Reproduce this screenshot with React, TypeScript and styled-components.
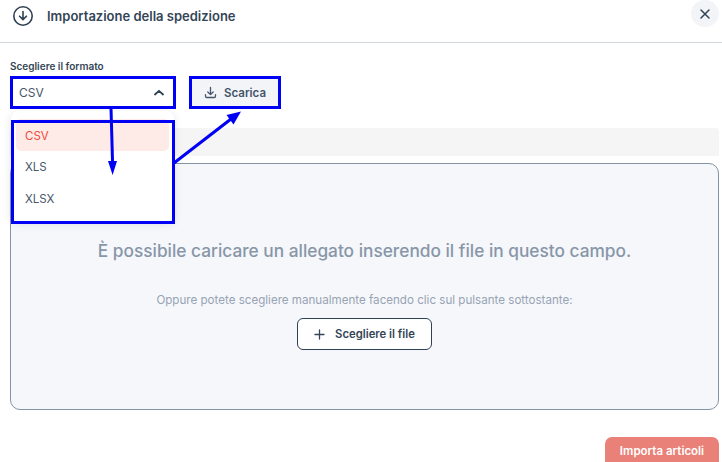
import React from "react";
import styled, { createGlobalStyle } from "styled-components";

const Global = createGlobalStyle`
  html, body { margin: 0; padding: 0; background: #fff; }
  body { font-family: Inter, "Liberation Sans", sans-serif; width: 722px; height: 462px; overflow: hidden; position: relative; }
`;

const Modal = styled.div`
  width: 722px;
  height: 462px;
  overflow: hidden;
  position: relative;
  display: flex;
  flex-direction: column;
`;

const Header = styled.header`
  border-bottom: 1px solid #d0d5dd;
  display: flex;
  align-items: center;
  padding: 0 0 10px 12px;
  height: 32px;
  flex: none;
`;

const HeaderIcon = styled.span`
  display: flex;
  width: 22px;
  height: 22px;
  color: #2f4154;
  margin-right: 13px;
`;

const Title = styled.h1`
  margin: 0;
  font-size: 13px;
  line-height: 16px;
  font-weight: 600;
  color: #344556;
`;

const CloseButton = styled.button`
  position: absolute;
  top: 0;
  left: 691px;
  width: 28px;
  height: 27px;
  border: 0;
  padding: 0;
  border-radius: 50%;
  background: #f2f4f8;
  color: #2f4154;
  display: flex;
  align-items: center;
  justify-content: center;
`;

const Body = styled.main`
  flex: 1;
  display: flex;
  flex-direction: column;
  padding: 17px 3px 0 10px;
  min-height: 0;
`;

const Label = styled.label`
  font-size: 10px;
  line-height: 12px;
  font-weight: 600;
  color: #344556;
  margin-bottom: 4px;
  flex: none;
`;

const Controls = styled.div`
  display: flex;
  gap: 13px;
  height: 33px;
  flex: none;
`;

const Select = styled.div`
  width: 166px;
  box-sizing: border-box;
  display: flex;
  align-items: center;
  justify-content: space-between;
  padding: 0 12px 0 9px;
  font-size: 12px;
  color: #475669;
  background: #fff;
`;

const DownloadButton = styled.button`
  width: 92px;
  border: 0;
  background: #f2f4f8;
  color: #44546a;
  display: flex;
  align-items: center;
  justify-content: center;
  gap: 7px;
  font: 600 11.5px Inter, "Liberation Sans", sans-serif;
  padding: 0;
`;

const NoticeBar = styled.div`
  height: 28px;
  margin-top: 19px;
  background: #f5f5f5;
  border-radius: 4px 4px 0 0;
  flex: none;
`;

const DropZone = styled.section`
  height: 247px;
  box-sizing: border-box;
  margin-top: 7px;
  border: 1px solid #8593a5;
  border-radius: 10px;
  background: #f5f7fb;
  display: flex;
  flex-direction: column;
  align-items: center;
  padding-top: 76px;
  flex: none;
`;

const DropTitle = styled.p`
  margin: 0;
  font-size: 17.3px;
  line-height: 22px;
  font-weight: 500;
  color: #8896a8;
`;

const DropHint = styled.p`
  margin: 31px 0 0;
  font-size: 11.6px;
  line-height: 14px;
  color: #98a3b3;
`;

const ChooseButton = styled.button`
  margin-top: 11px;
  width: 135px;
  height: 32px;
  border: 1px solid #2f4154;
  border-radius: 6px;
  background: #fff;
  color: #344556;
  display: flex;
  align-items: center;
  justify-content: center;
  gap: 10px;
  font: 600 11.3px Inter, "Liberation Sans", sans-serif;
  padding: 0;
`;

const Footer = styled.footer`
  display: flex;
  justify-content: flex-end;
  margin-top: 27px;
  flex: none;
`;

const ImportButton = styled.button`
  width: 114px;
  height: 36px;
  border: 0;
  border-radius: 7px;
  background: #ea8178;
  color: #fff;
  font: 600 11.5px Inter, "Liberation Sans", sans-serif;
  padding: 0 0 9px;
`;

const Menu = styled.ul`
  position: absolute;
  left: 11px;
  top: 111px;
  width: 163px;
  height: 111px;
  margin: 0;
  padding: 8px 5px 0;
  box-sizing: border-box;
  list-style: none;
  background: #fff;
  border-radius: 8px;
  box-shadow: 0 2px 10px rgba(60, 70, 90, 0.14);
`;

const MenuItem = styled.li<{ $active?: boolean }>`
  height: 32px;
  padding: ${(p) => (p.$active ? "1px" : "0")} 0 0 9px;
  box-sizing: border-box;
  display: flex;
  align-items: center;
  font-size: 11.5px;
  border-radius: 5px;
  color: ${(p) => (p.$active ? "#ee4b3e" : "#475669")};
  background: ${(p) => (p.$active ? "#feeae6" : "transparent")};
`;

const Annotation = styled.span<{ $l: number; $t: number; $w: number; $h: number }>`
  position: absolute;
  left: ${(p) => p.$l}px;
  top: ${(p) => p.$t}px;
  width: ${(p) => p.$w}px;
  height: ${(p) => p.$h}px;
  box-sizing: border-box;
  border: 3px solid #0000f5;
  pointer-events: none;
`;

const Arrows = styled.svg`
  position: absolute;
  left: 0;
  top: 0;
  pointer-events: none;
`;

export default function App() {
  return (
    <Modal>
      <Global />
      <Header>
        <HeaderIcon>
          <svg width="22" height="22" viewBox="0 0 22 22" fill="none" stroke="currentColor" strokeWidth="1.6" strokeLinecap="round" strokeLinejoin="round">
            <circle cx="11" cy="11" r="9.2" />
            <path d="M11 6.5v8M7.6 11.2 11 14.6l3.4-3.4" />
          </svg>
        </HeaderIcon>
        <Title>Importazione della spedizione</Title>
      </Header>
      <CloseButton aria-label="Chiudi">
        <svg width="12" height="12" viewBox="0 0 12 12" fill="none" stroke="currentColor" strokeWidth="1.5" strokeLinecap="round">
          <path d="M2 2l8 8M10 2l-8 8" />
        </svg>
      </CloseButton>
      <Body>
        <Label>Scegliere il formato</Label>
        <Controls>
          <Select>
            CSV
            <svg width="10" height="7" viewBox="0 0 10 7" fill="none" stroke="#2f4154" strokeWidth="1.8" strokeLinecap="round" strokeLinejoin="round">
              <path d="M1 5.5 5 1.8l4 3.7" />
            </svg>
          </Select>
          <DownloadButton>
            <svg width="13" height="13" viewBox="0 0 13 13" fill="none" stroke="currentColor" strokeWidth="1.3" strokeLinecap="round" strokeLinejoin="round">
              <path d="M6.5 1.500v7M3.800 6 6.500 8.600 9.200 6M1.500 8.600v1.600c0 .8.500 1.300 1.300 1.300h7.400c.8 0 1.300-.5 1.300-1.300V8.600" />
            </svg>
            Scarica
          </DownloadButton>
        </Controls>
        <NoticeBar />
        <DropZone>
          <DropTitle>È possibile caricare un allegato inserendo il file in questo campo.</DropTitle>
          <DropHint>Oppure potete scegliere manualmente facendo clic sul pulsante sottostante:</DropHint>
          <ChooseButton>
            <svg width="11" height="11" viewBox="0 0 11 11" fill="none" stroke="currentColor" strokeWidth="1.3" strokeLinecap="round">
              <path d="M5.500 1v9M1 5.500h9" />
            </svg>
            Scegliere il file
          </ChooseButton>
        </DropZone>
        <Footer>
          <ImportButton>Importa articoli</ImportButton>
        </Footer>
      </Body>
      <Menu>
        <MenuItem $active>CSV</MenuItem>
        <MenuItem>XLS</MenuItem>
        <MenuItem>XLSX</MenuItem>
      </Menu>
      <Annotation $l={10} $t={76} $w={166} $h={33} />
      <Annotation $l={189} $t={76} $w={92} $h={33} />
      <Annotation $l={11} $t={120} $w={164} $h={104} />
      <Arrows width="722" height="462" viewBox="0 0 722 462" fill="#0000f5" stroke="none">
        <path d="M111 108l1.600 56" stroke="#0000f5" strokeWidth="3" fill="none" />
        <path d="M108 161h9l-4.400 14z" />
        <path d="M174 163l57-44" stroke="#0000f5" strokeWidth="3" fill="none" />
        <path d="M226.500 115l14.500-3.500-7.500 13z" />
      </Arrows>
    </Modal>
  );
}
